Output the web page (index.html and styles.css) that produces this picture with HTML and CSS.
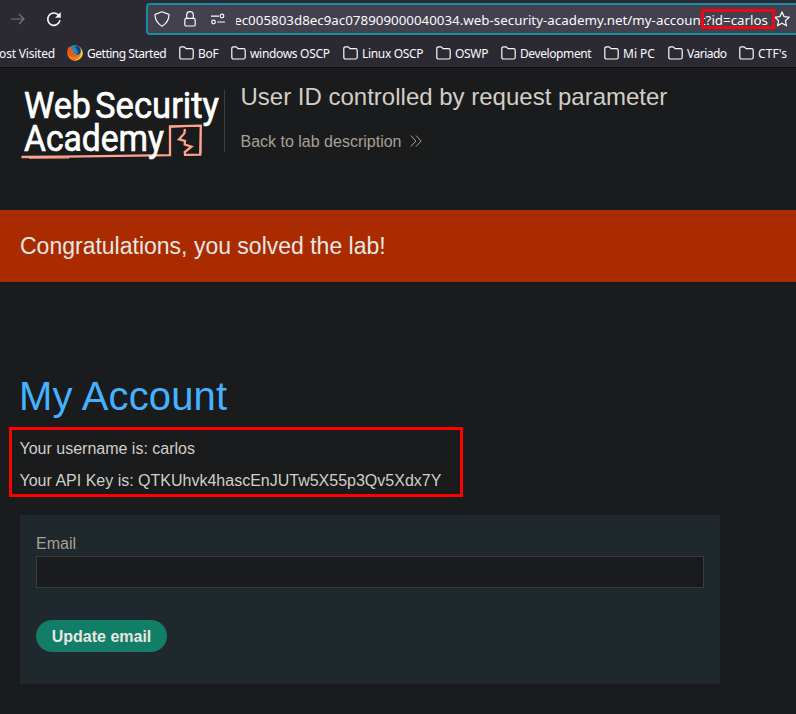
FILE: index.html
```html
<!DOCTYPE html>
<html lang="en">
<head>
<meta charset="utf-8">
<title>User ID controlled by request parameter</title>
<link rel="stylesheet" href="styles.css">
</head>
<body>
<svg class="defs" width="0" height="0"><defs>
<symbol id="folder" viewBox="0 0 15 14"><path d="M.8 11.2V2.6q0-1.8 1.8-1.8h2.2q.8 0 1.3.7l.8 1.1h5.5q1.8 0 1.8 1.8v6.8q0 1.8-1.8 1.8H2.6Q.8 13 .8 11.2z"/></symbol>
</defs></svg>
<header class="browser">
  <div class="toolbar">
    <svg class="forward" width="16" height="16" viewBox="0 0 16 16"><path d="M1 8h13M9 3l5 5-5 5"/></svg>
    <svg class="reload" width="16" height="16" viewBox="0 0 16 16"><path d="M14 9.2A6.2 6.2 0 1 1 12.2 3.7L14 5.4"/><path class="solid" d="M14.7 1v5.8H9z"/></svg>
    <div class="urlbar">
      <svg class="shield" width="16" height="16" viewBox="0 0 16 16"><path d="M8 .8 14.2 3.1q.9 0 .8 1.2Q14.6 11.5 8 15.2 1.4 11.5 1 4.3 .9 3.1 1.8 3.1z"/></svg>
      <svg class="lock" width="14" height="16" viewBox="0 0 14 16"><rect x="1.8" y="7.3" width="10.4" height="7.7" rx="1.6"/><path d="M3.7 7V4a3.3 3.3 0 0 1 6.6 0v3"/></svg>
      <svg class="perms" width="16" height="12" viewBox="0 0 16 12"><path d="M1 3.2h8M7.2 9H15"/><circle cx="12" cy="3" r="1.8"/><circle cx="3.5" cy="9" r="1.8"/></svg>
      <div class="url"><span>ec005803d8ec9ac078909000040034.web-security-academy.net/my-account?id=carlos</span></div>
      <svg class="star" width="16" height="16" viewBox="0 0 16 16"><path d="m8 1 2.1 4.6 5 .6-3.7 3.5 1 5L8 12.3l-4.4 2.4 1-5L.9 6.2l5-.6z"/></svg>
      <div class="url-mark"></div>
    </div>
  </div>
  <nav class="bookmarks">
    <a class="bm visited"><span>Most Visited</span></a>
    <a class="bm start"><svg width="16" height="16" viewBox="0 0 16 16"><circle cx="8" cy="8" r="7.7" fill="#f27a18"/><path fill="#ffd23d" d="M13.2 2.6q4 4.5 1.6 9-3 4.4-7.7 4 6.4-2 6.6-6.7z"/><path fill="#1688cf" d="M3.3 2.2Q8-1.5 12.6 2.3q2.5 3.2.4 6.2-3.2 2.6-6.5.1L4 5z"/><path fill="#163e73" d="M8 1q5-.6 5.7 4.5 0 4.8-5.4 4.4 3-.9 2.8-3z"/><path fill="#e85b17" d="M.7 4 2 1.5 4.5 4l3.2.8-1.9 2.4.6 2.3 3.3 1-1.5 1.4-4.5-.5L.5 9z"/></svg><span>Getting Started</span></a>
    <a class="bm bof"><svg class="folder"><use href="#folder"/></svg><span>BoF</span></a>
    <a class="bm windows"><svg class="folder"><use href="#folder"/></svg><span>windows OSCP</span></a>
    <a class="bm linux"><svg class="folder"><use href="#folder"/></svg><span>Linux OSCP</span></a>
    <a class="bm oswp"><svg class="folder"><use href="#folder"/></svg><span>OSWP</span></a>
    <a class="bm dev"><svg class="folder"><use href="#folder"/></svg><span>Development</span></a>
    <a class="bm mipc"><svg class="folder"><use href="#folder"/></svg><span>Mi PC</span></a>
    <a class="bm variado"><svg class="folder"><use href="#folder"/></svg><span>Variado</span></a>
    <a class="bm ctf"><svg class="folder"><use href="#folder"/></svg><span>CTF's</span></a>
  </nav>
</header>
<section class="lab-header">
  <svg class="logo" width="204" height="76" viewBox="20 86 204 76">
    <g class="logo-line"><path d="M21.5 157 65 156.6l105-1.4V126.3l30.8-.6-.6 28.9-15.2.2-.2-2.7 6.7-5.4-6.8-2.2.3-3.6-6-1.6 5.3-5.8.7-4.5"/><path class="thin" d="M29 158.2 69 158M171 127.2l29.8-1.4.2 28"/></g>
    <text x="24" y="118" textLength="67" lengthAdjust="spacingAndGlyphs">Web</text>
    <text x="95" y="118" textLength="124" lengthAdjust="spacingAndGlyphs">Security</text>
    <text x="24" y="150.8" textLength="140" lengthAdjust="spacingAndGlyphs">Academy</text>
  </svg>
  <div class="lab-title">
    <h2>User ID controlled by request parameter</h2>
    <a class="back">Back to lab description<svg width="12" height="12" viewBox="0 0 12 12"><path d="m.8.5 5.1 5.5L.8 11.5M6 .5 11.1 6 6 11.5"/></svg></a>
  </div>
</section>
<section class="solved">Congratulations, you solved the lab!</section>
<main>
  <h1>My Account</h1>
  <div class="details">
    <p>Your username is: carlos</p>
    <p>Your API Key is: QTKUhvk4hascEnJUTw5X55p3Qv5Xdx7Y</p>
  </div>
  <form>
    <label for="email">Email</label>
    <input id="email" type="email">
    <button type="button">Update email</button>
  </form>
</main>
</body>
</html>
```
FILE: styles.css
```css
* { box-sizing: border-box; }
body { margin: 0; height: 714px; overflow: hidden; background: #1a1b1c; color: #d2cec7; font: 16px/20px "Liberation Sans", Arial, sans-serif; }
svg { flex: none; fill: none; stroke: currentColor; }
.defs { position: absolute; }
.browser { height: 68px; background: #2b2a33; border-bottom: 1px solid #0c0c0d; color: #fbfbfe; font-family: "Noto Sans", sans-serif; overflow: hidden; }
.toolbar { display: flex; align-items: center; height: 38px; padding-left: 10px; }
.forward { color: #77767e; stroke-width: 1.2; }
.reload { margin-left: 20px; stroke-width: 1.6; }
.solid { fill: currentColor; stroke: none; }
.urlbar { position: relative; display: flex; align-items: center; flex: none; width: 660px; height: 32px; margin-left: 84px; padding-left: 6px; border: 2px solid #168da5; border-radius: 4px; background: #42414d; stroke-width: 1.2; }
.lock { margin-left: 13px; }
.perms { margin-left: 13px; }
.url { display: flex; justify-content: flex-end; width: 532px; margin-left: 10px; padding-top: 2px; overflow: hidden; white-space: nowrap; font-size: 13.33px; line-height: 20px; letter-spacing: .01px; }
.star { margin-left: 6px; }
.url-mark { position: absolute; left: 553px; top: 4px; width: 74px; height: 20px; border: 3px solid #f00712; }
.bookmarks { display: flex; height: 30px; font-size: 12px; line-height: 20px; letter-spacing: -.32px; }
.bm { display: flex; align-items: center; flex: none; gap: 4px; height: 30px; white-space: nowrap; }
.bm span { padding-top: 2px; }
.bm svg { stroke: none; }
.bm .folder { width: 15px; height: 14px; stroke: currentColor; stroke-width: 1.2; }
.visited { width: 67px; padding-right: 12px; justify-content: flex-end; letter-spacing: -.2px; }
.start { width: 112px; letter-spacing: -.48px; }
.bof { width: 52px; }
.windows { width: 112px; }
.linux { width: 93px; }
.oswp { width: 65px; }
.dev { width: 103px; }
.dev span { letter-spacing: -.4px; }
.mipc { width: 64px; letter-spacing: 0; }
.variado { width: 71px; letter-spacing: -.5px; }
.ctf { letter-spacing: .1px; }
.lab-header { display: flex; height: 142px; padding: 18px 20px 0; }
.logo { stroke: none; fill: #fff; font: 400 37.5px Roboto, sans-serif; }
.logo text { stroke: #fff; stroke-width: .7; }
.logo-line { fill: none; stroke: #ffa38c; stroke-width: 2.3; }
.thin { stroke-width: 1; }
.lab-title { height: 62px; margin-top: 4px; padding-left: 15.5px; border-left: 1px solid #3a3f41; }
h2 { margin: -7px 0 0; font-size: 24px; font-weight: 400; line-height: 28px; }
.back { display: flex; align-items: center; gap: 9px; margin-top: 21px; color: #a8a095; }
.back svg { margin-top: -2px; }
.solved { height: 72px; padding-left: 20px; background: #aa2b00; color: #e8e6e3; font-size: 23px; line-height: 72px; }
main { padding: 90px 20px 0; }
h1 { margin: 0 0 0 -1px; color: #46b2ff; font-size: 40px; font-weight: 400; line-height: 48px; letter-spacing: .15px; }
.details { width: 454px; height: 70px; margin: 7px 0 18px -11px; padding: 9px 7.5px 0; border: 3px solid #f00; }
.details p { margin: 0 0 12px; white-space: nowrap; }
form { display: flex; flex-direction: column; align-items: flex-start; width: 700px; height: 169px; padding: 19px 16px; background: #1e282d; }
label { color: #a8a095; }
input { width: 668px; height: 32px; margin-top: 2px; border: 1px solid #373d3d; background: #1a1b1c; }
button { width: 131px; height: 32px; margin-top: 32px; padding: 1px 0 0; border: 0; border-radius: 16px; background: #127e67; color: #e8e6e3; font: bold 16px/31px "Liberation Sans", Arial, sans-serif; }
```
